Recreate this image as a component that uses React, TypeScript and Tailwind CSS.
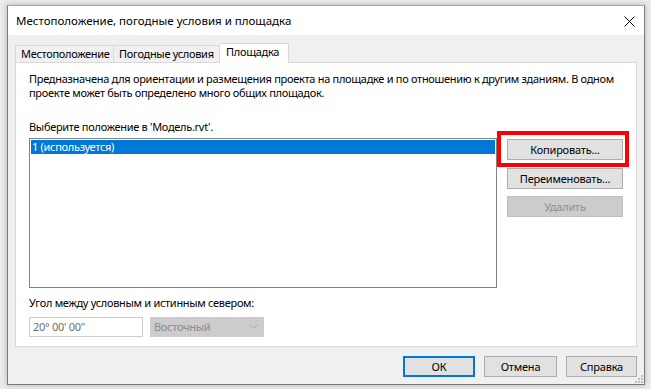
import React from "react";

const font = { fontFamily: '"Noto Sans", "Open Sans", sans-serif' };

function Btn({ children, disabled = false, def = false, className = "" }: { children: React.ReactNode; disabled?: boolean; def?: boolean; className?: string }) {
  const base = "flex items-center justify-center text-[11px] tracking-[-0.2px] leading-none h-[21px] whitespace-nowrap ";
  const look = disabled
    ? "bg-[#cccccc] border border-[#bfbfbf] text-[#8f8f8f]"
    : def
    ? "bg-[#e1e1e1] border-2 border-[#0078d7] text-black"
    : "bg-[#e1e1e1] border border-[#adadad] text-black";
  return <div className={base + look + " " + className}>{children}</div>;
}

export default function App() {
  return (
    <div className="w-[651px] h-[389px] bg-[#ececec] pl-[7px] pt-[5px] overflow-hidden" style={font}>
      <div className="w-[638px] h-[380px] border border-[#7a7a7a] border-t-[#a8a8a8] bg-[#f0f0f0] flex flex-col shadow-[0_0_6px_rgba(0,0,0,0.25)]">
        {/* Title bar */}
        <div className="h-[29px] bg-white flex items-center justify-between pl-[8px] pr-[9px] shrink-0">
          <span className="text-[11.5px] text-black pt-[1px] whitespace-nowrap">Местоположение, погодные условия и площадка</span>
          <svg width="11" height="11" viewBox="0 0 11 11" className="mt-[1px]">
            <path d="M0.5 0.5 L10.5 10.5 M10.5 0.5 L0.5 10.5" stroke="#000" strokeWidth="1" />
          </svg>
        </div>
        {/* Body */}
        <div className="flex-1 flex flex-col px-[7px] pt-[8px] relative">
          {/* Tabs */}
          <div className="flex items-end h-[19px] relative z-10 text-[11px] tracking-[-0.3px] whitespace-nowrap">
            <div className="h-[17px] px-[5px] border border-b-0 border-[#d9d9d9] bg-[#f0f0f0] flex items-center w-[99px]">Местоположение</div>
            <div className="h-[17px] px-[5px] border border-b-0 border-l-0 border-[#d9d9d9] bg-[#f0f0f0] flex items-center w-[106px]">Погодные условия</div>
            <div className="h-[20px] -mb-[1px] px-[6px] border border-b-0 border-l-0 border-[#d9d9d9] bg-white flex items-center w-[69px] pb-[2px]">Площадка</div>
          </div>
          {/* Panel */}
          <div className="h-[285px] border border-[#d9d9d9] bg-white pl-[13px] pr-[12px] pt-[9px] text-[11px] tracking-[-0.3px] text-black flex flex-col">
            <p className="leading-[14px] whitespace-nowrap">
              Предназначена для ориентации и размещения проекта на площадке и по отношению к другим зданиям. В одном
              <br />
              проекте может быть определено много общих площадок.
            </p>
            <p className="mt-[20px] leading-[14px]">Выберите положение в 'Модель.rvt'.</p>
            <div className="flex mt-[4px] gap-[10px]">
              <div className="w-[468px] h-[150px] border border-[#828282] p-[1px]">
                <div className="bg-[#0078d7] text-white h-[14px] leading-[14px] pl-[1px]">1 (используется)</div>
              </div>
              <div className="flex flex-col gap-[8px] pt-[1px]">
                <div className="relative">
                  <Btn className="w-[116px]">Копировать...</Btn>
                  <div className="absolute left-[-10px] top-[-8px] w-[132px] h-[36px] border-[4px] border-[#ff0000] pointer-events-none" />
                </div>
                <Btn className="w-[116px]">Переименовать...</Btn>
                <Btn disabled className="w-[116px] -mt-[1px]">Удалить</Btn>
              </div>
            </div>
            <p className="mt-[8px] leading-[14px]">Угол между условным и истинным севером:</p>
            <div className="flex mt-[7px] gap-[7px]">
              <div className="w-[114px] h-[20px] border border-[#cccccc] bg-white text-[#6d6d6d] flex items-center pl-[3px]">20° 00' 00"</div>
              <div className="w-[114px] h-[20px] border border-[#cccccc] bg-[#cccccc] text-[#8a8a8a] flex items-center justify-between pl-[3px] pr-[5px]">
                <span>Восточный</span>
                <svg width="9" height="6" viewBox="0 0 9 6">
                  <path d="M0.5 0.5 L4.5 4.5 L8.5 0.5" stroke="#a8a8a8" fill="none" strokeWidth="1" />
                </svg>
              </div>
            </div>
          </div>
          {/* Bottom buttons */}
          <div className="flex justify-end gap-[9px] mt-[9px]">
            <Btn def className="w-[72px] h-[20px]">ОК</Btn>
            <Btn className="w-[73px] h-[20px]">Отмена</Btn>
            <Btn className="w-[71px] h-[20px]">Справка</Btn>
          </div>
          <svg width="8" height="8" viewBox="0 0 8 8" className="absolute right-[1px] bottom-[1px]">
            <rect x="6" y="0" width="2" height="2" fill="#bcbcbc" />
            <rect x="3" y="3" width="2" height="2" fill="#bcbcbc" />
            <rect x="6" y="3" width="2" height="2" fill="#bcbcbc" />
            <rect x="0" y="6" width="2" height="2" fill="#bcbcbc" />
            <rect x="3" y="6" width="2" height="2" fill="#bcbcbc" />
            <rect x="6" y="6" width="2" height="2" fill="#bcbcbc" />
          </svg>
        </div>
      </div>
    </div>
  );
}
